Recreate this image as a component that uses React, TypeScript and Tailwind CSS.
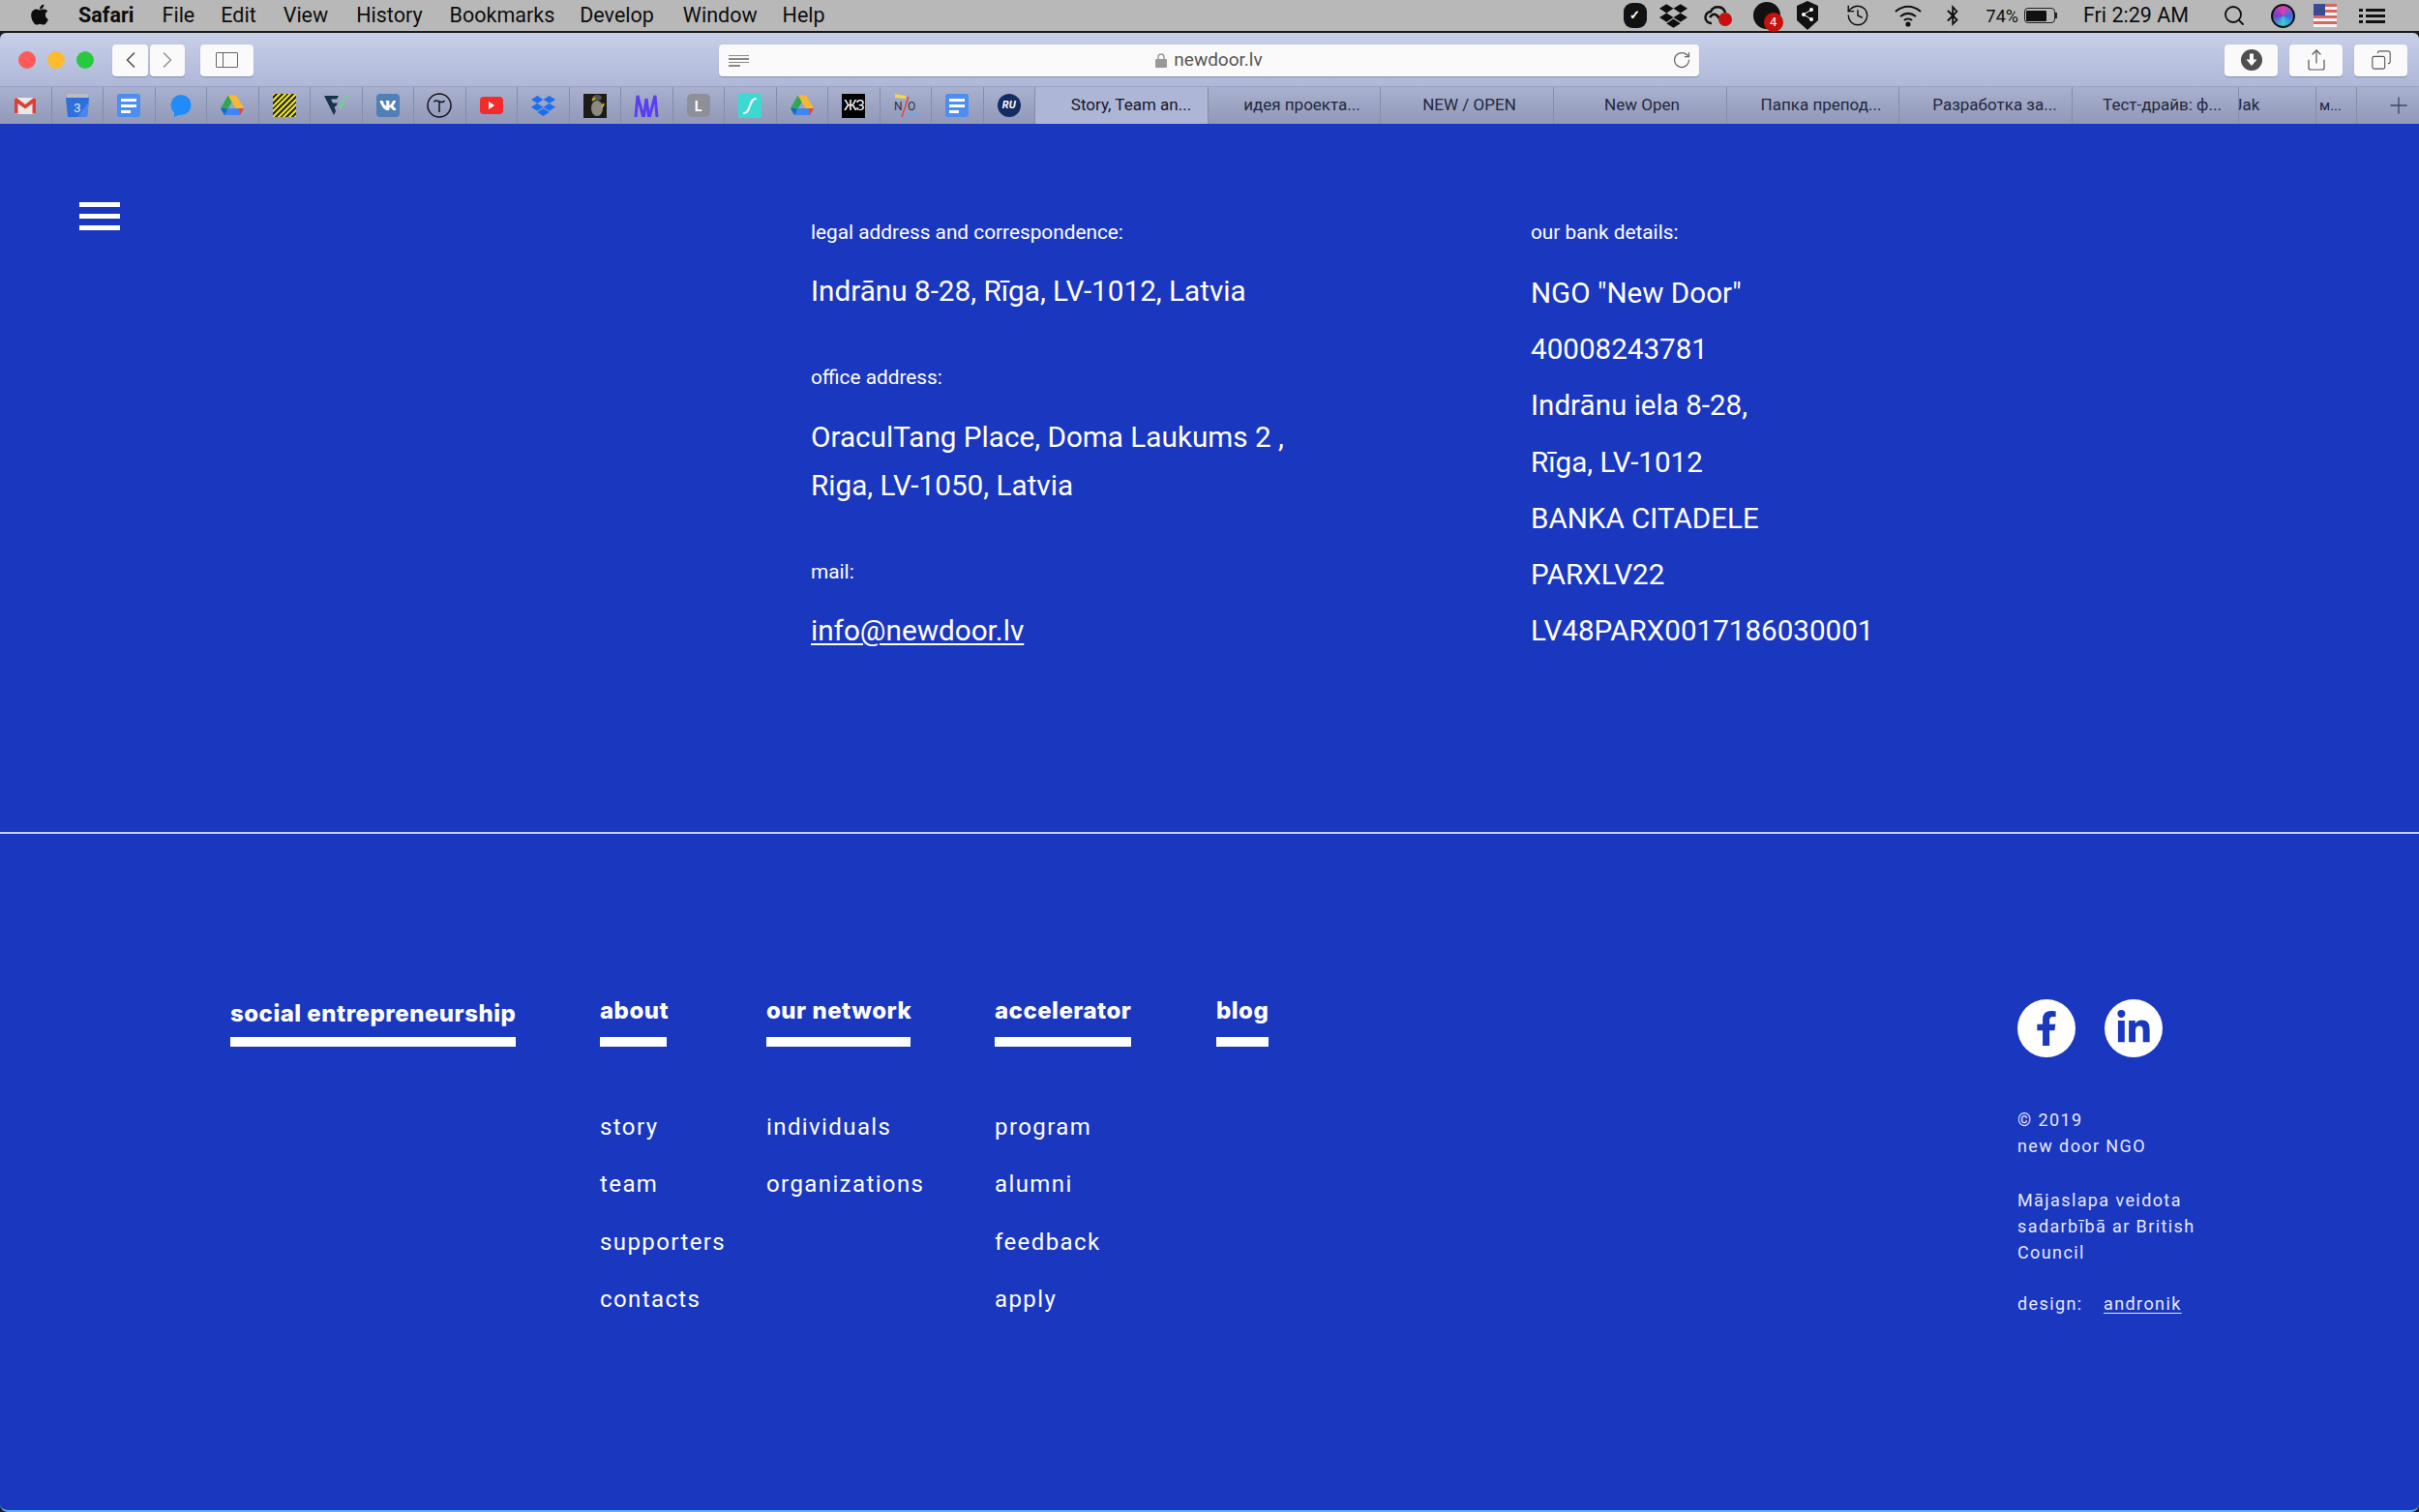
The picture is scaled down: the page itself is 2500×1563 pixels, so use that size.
import React from "react";
import { FaApple, FaDropbox, FaVk, FaFacebookF, FaLinkedinIn, FaBluetoothB } from "react-icons/fa";
import { ChevronLeft, ChevronRight, RotateCw, Share, Copy, Search, History, Plus } from "lucide-react";

const Drive = () => (
  <svg width="26" height="24" viewBox="0 0 26 24">
    <path d="M8.7 1.500 1 15l4 7 7.600-13.500z" fill="#2fa84f" />
    <path d="M8.700 1.500h8.300L25 15h-8.200z" fill="#f9b92e" />
    <path d="M5 22h16l4-7H9z" fill="#4285f4" />
    <path d="M21 22l4-7h-5z" fill="#ea4335" />
    <path d="M1 15l4 7 3-5-1.500-2z" fill="#1967d2" />
  </svg>
);
const Docs = () => (
  <div className="w-[24px] h-[24px] rounded-[3px] bg-[#4d8ef0] flex flex-col justify-center gap-[3px] px-[4px]">
    <div className="h-[3px] w-[16px] bg-white" />
    <div className="h-[3px] w-[16px] bg-white" />
    <div className="h-[3px] w-[10px] bg-white" />
  </div>
);

const favicons: React.ReactNode[] = [
  <svg key="g" width="22" height="17" viewBox="0 0 22 17">
    <rect width="22" height="17" rx="1" fill="#e8e8e8" />
    <path d="M0 1v15.500h3.500V6L11 11.500 18.500 6v10.500H22V1l-2-1-9 7L2 0z" fill="#d9403a" />
  </svg>,
  <svg key="c" width="24" height="25" viewBox="0 0 24 25">
    <rect x="1" y="0" width="22" height="6" rx="1" fill="#b9bcc6" />
    <path d="M0 4h24l-2 20H2z" fill="#2f6fdc" />
    <path d="M12 24 24 8l-2 16z" fill="#4a86e8" />
    <text x="12" y="19" fontSize="13" fill="#dfe9ff" textAnchor="middle" fontFamily="Roboto, sans-serif">3</text>
  </svg>,
  <Docs key="d" />,
  <svg key="b" width="22" height="23" viewBox="0 0 22 23">
    <circle cx="11" cy="10.500" r="10.500" fill="#1f8cf9" />
    <path d="M4 17v6l7-3z" fill="#1f8cf9" />
  </svg>,
  <Drive key="dr" />,
  <div key="s" className="w-[24px] h-[24px] bg-[repeating-linear-gradient(135deg,#e6dc2a_0_2px,#2b2b20_2px_4px)]" />,
  <svg key="f" width="24" height="22" viewBox="0 0 24 22">
    <path d="M0 1h15l-2 3.500H7l2 4h5l-2 3.500h-1.500l1.500 5-2 4z" fill="#16344a" />
    <path d="M15 14l4-8h3l-4 8zM22.500 1a1.500 1.500 0 1 0 .01 0" fill="#5fdc8c" />
  </svg>,
  <div key="v" className="w-[24px] h-[24px] rounded-[4px] bg-[#4f7fb5] flex items-center justify-center text-white">
    <FaVk size={18} />
  </div>,
  <svg key="t" width="26" height="26" viewBox="0 0 26 26" fill="none" stroke="#15151c" strokeWidth="1.500">
    <circle cx="13" cy="13" r="12" />
    <path d="M7.500 9.500c1-2.500 3-1.500 5.500-.5s4 1 5.500-1M13 9v11" />
  </svg>,
  <div key="y" className="w-[24px] h-[18px] rounded-[4px] bg-[#f32b2b] flex items-center justify-center">
    <div className="w-0 h-0 border-y-[4px] border-y-transparent border-l-[6px] border-l-white" />
  </div>,
  <FaDropbox key="db" size={25} color="#1b6ff0" />,
  <svg key="p" width="24" height="25" viewBox="0 0 24 25">
    <rect width="24" height="25" fill="#1c1b18" />
    <ellipse cx="14" cy="15" rx="6" ry="8" fill="#8a8a82" />
    <ellipse cx="14" cy="4" rx="5" ry="3" fill="#55554e" />
    <path d="M9 7l3-3M19 14l2-4" stroke="#d4b520" strokeWidth="2" />
  </svg>,
  <svg key="m" width="26" height="24" viewBox="0 0 26 24" fill="none" stroke="#5a3ff0" strokeWidth="3">
    <path d="M2 24 4 2l5.500 21h1L13 5l2.500 18h1L22 2l2 22" />
  </svg>,
  <div key="l" className="w-[24px] h-[24px] rounded-[5px] bg-[#8d8f99] flex items-center justify-center text-white text-[14px] font-bold font-['Inter',sans-serif]">L</div>,
  <svg key="sw" width="24" height="25" viewBox="0 0 24 25">
    <rect width="24" height="25" fill="#3cd9d2" />
    <path d="M6 20c7 0 5-15 12-15" fill="none" stroke="#fff" strokeWidth="2" strokeLinecap="round" />
  </svg>,
  <Drive key="dr2" />,
  <div key="zh" className="w-[24px] h-[25px] bg-black flex items-center justify-center text-white text-[15px] font-['Roboto',sans-serif] tracking-[-1px]">ЖЗ</div>,
  <svg key="no" width="26" height="26" viewBox="0 0 26 26">
    <path d="M2 1l11 2v3L2 5z" fill="#f0d84a" />
    <path d="M14 22l11-2v3l-11 1z" fill="#6fa8e0" />
    <path d="M16 4 9 25" stroke="#e0483f" strokeWidth="1.500" />
    <text x="1" y="18" fontSize="12" fill="#2c3148" fontFamily="Roboto, sans-serif">N</text>
    <text x="15" y="18" fontSize="12" fill="#2c3148" fontFamily="Roboto, sans-serif">O</text>
  </svg>,
  <Docs key="d2" />,
  <div key="ru" className="w-[24px] h-[24px] rounded-full bg-[#132c62] flex items-center justify-center text-white text-[11px] font-bold italic font-['Roboto',sans-serif]">RU</div>,
];

const tabs = [
  { t: "Story, Team an...", c: "w-[179px] pl-[20px] bg-[#adb6d6] text-[#14172a]" },
  { t: "идея проекта...", c: "w-[178px] pl-[16px]" },
  { t: "NEW / OPEN", c: "w-[179px] pl-[5px]" },
  { t: "New Open", c: "w-[179px] pl-[4px]" },
  { t: "Папка препод...", c: "w-[178px] pl-[17px]" },
  { t: "Разработка за...", c: "w-[179px] pl-[19px]" },
  { t: "Тест-драйв: ф...", c: "w-[172px] pl-[14px]" },
];

const menus: [string, string][] = [
  ["File", "ml-[29px]"],
  ["Edit", "ml-[27px]"],
  ["View", "ml-[28px]"],
  ["History", "ml-[29px]"],
  ["Bookmarks", "ml-[28px]"],
  ["Develop", "ml-[26px]"],
  ["Window", "ml-[30px]"],
  ["Help", "ml-[26px]"],
];

const ToolBtn = ({ className, children }: { className: string; children?: React.ReactNode }) => (
  <div className={`h-[33px] bg-[#fafafa] rounded-[4px] shadow-[0_1px_1px_rgba(60,70,110,0.4)] flex items-center justify-center text-[#555] ${className}`}>
    {children}
  </div>
);

const Chrome = () => (
  <div className="font-['Roboto',sans-serif]">
    <div className="h-[32px] bg-[#b8b8b8] flex items-center text-[#0d0d0d] text-[21.500px] border-b-[2px] border-[#1a1a1a] box-content">
      <FaApple size={24} className="ml-[29px] mr-[28px] -mt-[3px]" />
      <span className="font-bold pt-[1px]">Safari</span>
      {menus.map(([m, c]) => (
        <span key={m} className={`${c} pt-[1px]`}>{m}</span>
      ))}
      <div className="ml-auto flex items-center h-full relative">
        <div className="w-[24px] h-[26px] rounded-[9px] bg-[#111] flex items-center justify-center text-white text-[13px] font-bold">✓</div>
        <FaDropbox size={29} className="ml-[13px]" />
        <svg width="30" height="24" viewBox="0 0 30 24" className="ml-[17px]" fill="none" stroke="#111" strokeWidth="2.500">
          <path d="M8 20a6 6 0 0 1-1-12 8 8 0 0 1 15 1" />
          <path d="M6 14c4-6 8-3 11 3" />
          <circle cx="22" cy="16" r="7" fill="#c8100c" stroke="none" />
        </svg>
        <div className="relative ml-[21px] w-[28px] h-[28px] rounded-full bg-[#111]">
          <div className="absolute -right-[3px] bottom-[-3px] w-[20px] h-[20px] rounded-full bg-[#c8100c] text-white text-[13px] leading-[20px] text-center">4</div>
        </div>
        <svg width="26" height="32" viewBox="0 0 26 32" className="ml-[15px]">
          <path d="M13 1l11 5v15L13 31 2 21V6z" fill="#111" />
          <circle cx="9" cy="15" r="2" fill="#fff" /><circle cx="17" cy="10" r="2" fill="#fff" /><circle cx="17" cy="20" r="2" fill="#fff" />
          <path d="M9 15l8-5M9 15l8 5" stroke="#fff" />
        </svg>
        <History size={26} strokeWidth={1.300} className="ml-[26px]" />
        <svg width="30" height="24" viewBox="0 0 30 24" className="ml-[24px]" fill="none" stroke="#111" strokeWidth="2.200">
          <path d="M2 8c8-7 18-7 26 0M7 13c5-4 11-4 16 0M11 17c2-2 6-2 8 0" />
          <circle cx="15" cy="21" r="1.500" fill="#111" />
        </svg>
        <FaBluetoothB size={22} className="ml-[20px]" />
        <span className="ml-[24px] text-[18px]">74%</span>
        <div className="ml-[6px] w-[32px] h-[16px] rounded-[4px] border-[1.500px] border-[#222] p-[1.500px]">
          <div className="w-[21px] h-full bg-[#111] rounded-[1px]" />
        </div>
        <div className="w-[2px] h-[6px] bg-[#222] mr-[27px]" />
        <span className="pt-[1px]">Fri 2:29 AM</span>
        <Search size={24} strokeWidth={1.800} className="ml-[35px]" />
        <div className="ml-[26px] w-[25px] h-[25px] rounded-full bg-[conic-gradient(#e23fb0,#3a6be0,#30d0d8,#7040c8,#e23fb0)] border-[2px] border-[#111]" />
        <div className="ml-[19px] w-[24px] h-[24px] bg-[repeating-linear-gradient(180deg,#d9655f_0_3px,#f5f5f5_3px_6px)] relative">
          <div className="absolute left-0 top-0 w-[12px] h-[12px] bg-[#3c4a92]" />
        </div>
        <div className="ml-[23px] mr-[35px] w-[27px] flex flex-col gap-[3px]">
          {[0, 1, 2].map((i) => (
            <div key={i} className="flex gap-[3px]">
              <div className="w-[4px] h-[3px] bg-[#111]" />
              <div className="flex-1 h-[3px] bg-[#111]" />
            </div>
          ))}
        </div>
      </div>
    </div>
    <div className="h-[56px] rounded-t-[6px] bg-[linear-gradient(180deg,#c7cfe8,#afb8d8)] flex items-center pt-[1px] border-b border-[#9aa3c4]">
      <div className="w-[18px] h-[18px] rounded-full bg-[#fc5b57] ml-[19px]" />
      <div className="w-[18px] h-[18px] rounded-full bg-[#fdbb2e] ml-[12px]" />
      <div className="w-[18px] h-[18px] rounded-full bg-[#2ac840] ml-[12px]" />
      <ToolBtn className="w-[37px] ml-[19px]"><ChevronLeft size={28} strokeWidth={1.500} /></ToolBtn>
      <ToolBtn className="w-[36px] ml-[2px]"><ChevronRight size={28} strokeWidth={1.500} className="text-[#999]" /></ToolBtn>
      <ToolBtn className="w-[55px] ml-[16px]">
        <div className="w-[23px] h-[16px] border-[1.500px] border-[#666] rounded-[1px] flex">
          <div className="w-[7px] border-r-[1.500px] border-[#666]" />
        </div>
      </ToolBtn>
      <ToolBtn className="w-[1013px] ml-[481px] relative text-[#444] text-[19px]">
        <div className="absolute left-[10px] top-[11px] flex flex-col gap-[2px]">
          <div className="w-[21px] h-[1.500px] bg-[#888]" />
          <div className="w-[21px] h-[1.500px] bg-[#888]" />
          <div className="w-[21px] h-[1.500px] bg-[#888]" />
          <div className="w-[12px] h-[1.500px] bg-[#888]" />
        </div>
        <svg width="12" height="16" viewBox="0 0 12 16" className="mr-[7px]">
          <path d="M3 7V5a3 3 0 0 1 6 0v2" fill="none" stroke="#999" strokeWidth="1.500" />
          <rect y="7" width="12" height="9" rx="1" fill="#999" />
        </svg>
        <span className="pt-[1px]">newdoor.lv</span>
        <RotateCw size={20} strokeWidth={1.500} className="absolute right-[8px] top-[6px] text-[#666]" />
      </ToolBtn>
      <ToolBtn className="w-[55px] ml-[543px]">
        <svg width="22" height="22" viewBox="0 0 22 22">
          <circle cx="11" cy="11" r="11" fill="#4f4f4f" />
          <path d="M9 4.500h4v6h3.500L11 17l-5.500-6.500H9z" fill="#fff" />
        </svg>
      </ToolBtn>
      <ToolBtn className="w-[55px] ml-[12px]"><Share size={24} strokeWidth={1.200} /></ToolBtn>
      <ToolBtn className="w-[55px] ml-[12px]"><Copy size={22} strokeWidth={1.200} className="-scale-x-100" /></ToolBtn>
    </div>
    <div className="h-[38px] bg-[linear-gradient(180deg,#a9b1cf,#9198b8)] flex text-[17px] text-[#23283f]">
      {favicons.map((f, i) => (
        <div key={i} className="w-[53.500px] h-full shrink-0 flex items-center justify-center border-r border-[#868da9]">
          {f}
        </div>
      ))}
      {tabs.map((t) => (
        <div key={t.t} className={`${t.c} h-full shrink-0 flex items-center justify-center border-r border-[#868da9]`}>
          {t.t}
        </div>
      ))}
      <div className="w-[80px] h-full shrink-0 flex items-center border-r border-[#868da9] overflow-hidden"><span className="-ml-[6px]">Jak</span></div>
      <div className="w-[42px] h-full shrink-0 flex items-center border-r border-[#868da9] overflow-hidden"><span className="pl-[3px] text-[15px]">м...</span></div>
      <div className="flex-1 flex items-center justify-center pl-[22px] text-[#3f4460]"><Plus size={28} strokeWidth={1.100} /></div>
    </div>
  </div>
);

const label = "text-[20.800px] leading-[30px] h-[30px]";
const value = "text-[29.700px] leading-[50px]";

const Contacts = () => (
  <section className="h-[734px] bg-[#1a37c0] border-b-[2px] border-[#c8cff0] pt-[97px] pl-[82px] flex text-white font-['Roboto',sans-serif] box-border">
    <div className="w-[756px] shrink-0">
      <div className="w-[42px] flex flex-col gap-[7px] -mt-[16px]">
        <div className="h-[5px] bg-white" />
        <div className="h-[5px] bg-white" />
        <div className="h-[5px] bg-white" />
      </div>
    </div>
    <div className="w-[744px] shrink-0">
      <div className={label}>legal address and correspondence:</div>
      <div className={`${value} mt-[21px]`}>Indrānu 8-28, Rīga, LV-1012, Latvia</div>
      <div className={`${label} mt-[49px]`}>office address:</div>
      <div className={`${value} mt-[22px]`}>
        OraculTang Place, Doma Laukums 2 ,
        <br />
        Riga, LV-1050, Latvia
      </div>
      <div className={`${label} mt-[49px]`}>mail:</div>
      <div className={`${value} mt-[21px]`}>
        <a className="underline underline-offset-[3px] decoration-[2px]">info@newdoor.lv</a>
      </div>
    </div>
    <div>
      <div className={label}>our bank details:</div>
      <div className="text-[29.600px] leading-[58.200px] mt-[19px]">
        <div>NGO "New Door"</div>
        <div>40008243781</div>
        <div>Indrānu iela 8-28,</div>
        <div>Rīga, LV-1012</div>
        <div>BANKA CITADELE</div>
        <div>PARXLV22</div>
        <div>LV48PARX0017186030001</div>
      </div>
    </div>
  </section>
);

const cols = [
  { h: "about", bar: "w-[69px]", w: "w-[172px]", items: ["story", "team", "supporters", "contacts"] },
  { h: "our network", bar: "w-[149px]", w: "w-[236px]", items: ["individuals", "organizations"] },
  { h: "accelerator", bar: "w-[141px]", w: "w-[229px]", items: ["program", "alumni", "feedback", "apply"] },
  { h: "blog", bar: "w-[54px]", w: "w-[828px]", items: [] as string[] },
];
const head = "font-['Inter',sans-serif] font-extrabold text-[24px] tracking-[0.500px] leading-[30px] whitespace-nowrap";

const Footer = () => (
  <footer className="h-[701px] bg-[#1a37c0] rounded-b-[8px] border-b-[2px] border-[#5cb0ef] pt-[168px] pl-[238px] flex text-white">
    <div className="w-[382px] shrink-0">
      <div className={`${head} pt-[3px]`}>social entrepreneurship</div>
      <div className="w-[295px] h-[10px] bg-white mt-[9px]" />
    </div>
    {cols.map((c) => (
      <div key={c.h} className={`${c.w} shrink-0`}>
        <div className={head}>{c.h}</div>
        <div className={`${c.bar} h-[10px] bg-white mt-[12px]`} />
        <ul className="mt-[54px] font-['Roboto',sans-serif] text-[24px] leading-[59.400px] tracking-[1.400px]">
          {c.items.map((i) => (
            <li key={i}>{i}</li>
          ))}
        </ul>
      </div>
    ))}
    <div className="pt-[3px] font-['Roboto',sans-serif] text-[18px] leading-[27px] tracking-[1.400px] text-[#e6e9fa]">
      <div className="flex gap-[30px]">
        <div className="w-[60px] h-[60px] rounded-full bg-white flex items-center justify-center text-[#1a37c0]"><FaFacebookF size={36} /></div>
        <div className="w-[60px] h-[60px] rounded-full bg-white flex items-center justify-center text-[#1a37c0]"><FaLinkedinIn size={38} /></div>
      </div>
      <div className="mt-[51px]">© 2019<br />new door NGO</div>
      <div className="mt-[29px] w-[210px]">Mājaslapa veidota sadarbībā ar British Council</div>
      <div className="mt-[26px] flex">
        <span className="w-[89px]">design:</span>
        <a className="underline underline-offset-[3px]">andronik</a>
      </div>
    </div>
  </footer>
);

export default function App() {
  return (
    <div className="w-[2500px] h-[1563px] overflow-hidden bg-[#1c1c24]">
      <Chrome />
      <Contacts />
      <Footer />
    </div>
  );
}
